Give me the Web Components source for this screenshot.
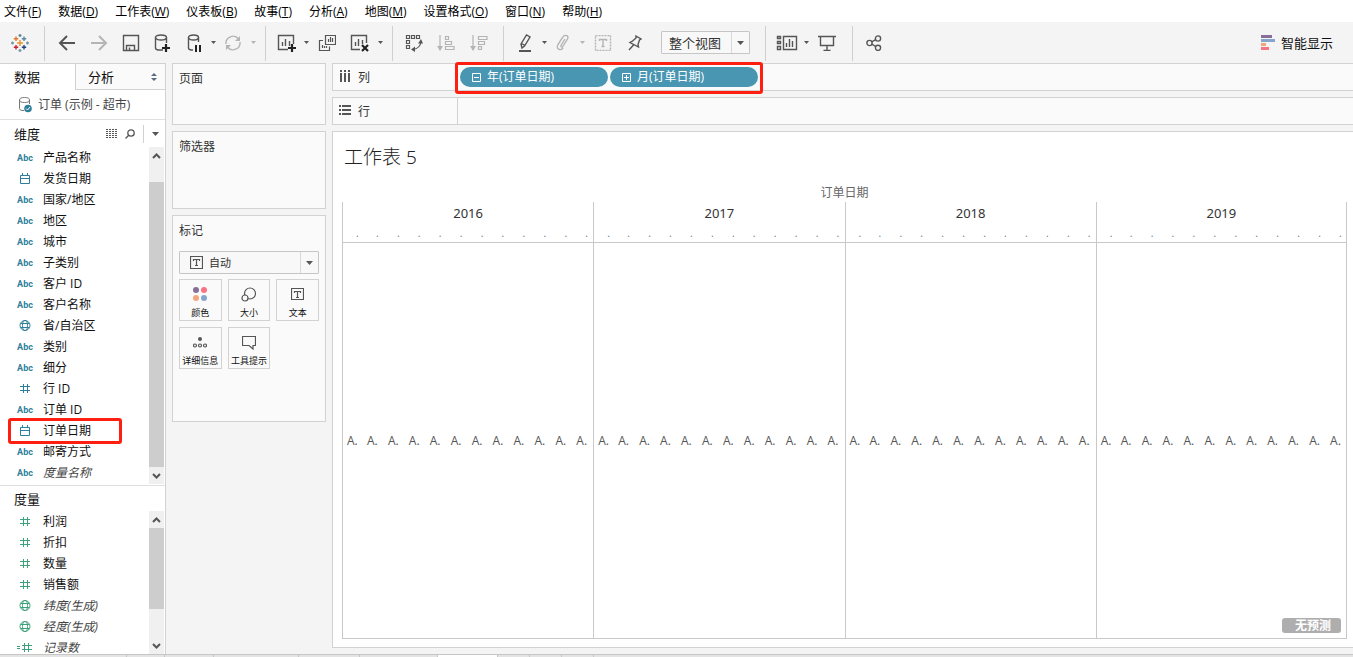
<!DOCTYPE html>
<html lang="zh-CN">
<head>
<meta charset="utf-8">
<title>工作表 5</title>
<style>
  body {
    margin: 0;
    font: 12px/20px "Open Sans", "Noto Sans CJK SC", sans-serif;
    color: #111;
    background: #f4f4f4;
    --line: #d2d2d2;
    --card: #fafafa;
    --mark: #ff1f10;
    --dimension: #2f7f9b;
    --measure: #3fa17c;
  }
</style>
</head>
<body>
<workbook-app></workbook-app>

<script>
const RESET = `
  *, *::before { box-sizing: border-box; }
  button { font: inherit; color: inherit; background: none; border: 0; padding: 0; margin: 0; cursor: pointer; }
  h1, h2, ul { margin: 0; padding: 0; font: inherit; list-style: none; }
  svg { display: block; }
`;

function define(name, markup, setup) {
  const template = document.createElement('template');
  customElements.define(name, class extends HTMLElement {
    constructor() {
      super();
      template.innerHTML = template.innerHTML || markup.replace('<style>', '<style>' + RESET);
      this.attachShadow({ mode: 'open' }).append(template.content.cloneNode(true));
    }
    connectedCallback() {
      if (setup) setup(this, this.shadowRoot);
    }
  });
}

const CARET = '<svg width="7" height="4"><path d="M0 0H7L3.500 4Z" fill="currentColor"/></svg>';
const SMALL_CARET = '<svg width="5" height="3" style="flex:none"><path d="M0 0H5L2.500 3Z" fill="currentColor"/></svg>';

/* ---------- menu bar ---------- */
define('menu-link', `
<style>
  :host { display: block; }
  a { color: #000; text-decoration: none; white-space: nowrap; }
  u { text-underline-offset: 1px; }
</style>
<a href="#"><slot></slot>(<u></u>)</a>`, (el, root) => {
  root.querySelector('u').textContent = el.getAttribute('key');
});

define('menu-bar', `
<style>
  :host { display: block; background: #fff; }
  nav { display: flex; gap: 17px; height: 22px; padding: 2px 4px 0; }
</style>
<nav aria-label="主菜单">
  <menu-link key="F">文件</menu-link>
  <menu-link key="D">数据</menu-link>
  <menu-link key="W">工作表</menu-link>
  <menu-link key="B">仪表板</menu-link>
  <menu-link key="T">故事</menu-link>
  <menu-link key="A">分析</menu-link>
  <menu-link key="M">地图</menu-link>
  <menu-link key="O">设置格式</menu-link>
  <menu-link key="N">窗口</menu-link>
  <menu-link key="H">帮助</menu-link>
</nav>`);

/* ---------- toolbar ---------- */
define('tool-button', `
<style>
  :host { display: flex; color: #555; }
  :host([disabled]) { color: #b4b4b4; }
  button { display: flex; align-items: center; justify-content: center; height: 32px; }
  .main { width: 32px; }
  :host([size="s"]) .main { width: 30px; }
  :host([size="l"]) .main { width: 34px; }
  .more { width: 8px; display: none; }
  :host([menu]) .more { display: flex; }
</style>
<button class="main"><slot></slot></button>
<button class="more" aria-label="更多">${SMALL_CARET}</button>`, (el, root) => {
  root.querySelector('.main').setAttribute('aria-label', el.getAttribute('label'));
});

define('drop-select', `
<style>
  :host { display: block; position: relative; color: #333; }
  select {
    appearance: none; display: block; width: 100%; height: 23px; margin: 0;
    padding: 0 20px 0 var(--inset, 7px);
    font: inherit; color: inherit; background: #f8f8f8;
    border: 1px solid #c6c6c6; border-radius: 1px; outline: 0;
  }
  span {
    position: absolute; inset: 1px 1px 1px auto; width: 18px;
    display: flex; align-items: center; justify-content: center;
    border-left: 1px solid #d8d8d8; color: #555; pointer-events: none;
  }
  ::slotted(svg) { position: absolute; left: 11px; top: 5px; pointer-events: none; }
</style>
<select><option></option></select><slot></slot><span>${CARET}</span>`, (el, root) => {
  root.querySelector('option').textContent = el.getAttribute('value');
  root.querySelector('select').setAttribute('aria-label', el.getAttribute('label'));
});

define('tool-bar', `
<style>
  :host { display: flex; align-items: center; height: 41px; padding: 0 20px 0 4px; }
  i { width: 1px; height: 35px; margin: 2px 6px 0 8px; background: #d0d0d0; }
  svg { fill: none; stroke: currentColor; stroke-width: 1.4; }
  drop-select { width: 89px; margin: 0 7px 0 11px; font-size: 13px; }
  .show { display: flex; align-items: center; gap: 6px; margin-left: auto; font-size: 13px; color: #111; }
</style>
<tool-button label="开始">
  <svg width="18" height="18"><path stroke="#eb912c" d="M9 6V12M6 9H12" stroke-width="1.500"/><path stroke="#e8762d" d="M5 2.500V7M2.800 4.700H7.200"/><path stroke="#5b879b" d="M13 2.500V7M10.800 4.700H15.200M9 0V3M7.500 1.500H10.500"/><path stroke="#c72035" d="M5 11V15.500M2.800 13.300H7.200"/><path stroke="#1f447e" d="M13 11V15.500M10.800 13.300H15.200"/><path stroke="#7199a6" d="M9 15V18M7.500 16.500H10.500M1.500 7.500V10.500M0 9H3M16.500 7.500V10.500M15 9H18"/></svg>
</tool-button>
<i></i>
<tool-button label="撤消"><svg width="18" height="16" style="stroke-width:2"><path d="M17 8H2M9 1L2 8L9 15"/></svg></tool-button>
<tool-button label="重做" disabled><svg width="18" height="16" style="stroke-width:2"><path d="M1 8H16M9 1L16 8L9 15"/></svg></tool-button>
<tool-button label="保存"><svg width="18" height="18"><path d="M1.500 1.500H16.500V16.500H1.500ZM4.500 16.500V11.500H12.500V16.500M7.500 13.500V16"/></svg></tool-button>
<tool-button label="新建数据源"><svg width="18" height="18"><path d="M9 16H4Q1.500 15.500 1.500 14V3.500M12.500 3.500V9"/><ellipse cx="7" cy="3.500" rx="5.500" ry="2.500"/><path d="M12 10V18M8 14H16" stroke="#222" stroke-width="2.200"/></svg></tool-button>
<tool-button label="暂停自动更新" menu size="s"><svg width="18" height="18"><path d="M8 16H6Q3.500 15.500 3.500 14V3.500M13.500 3.500V8"/><ellipse cx="8.500" cy="3.500" rx="5" ry="2.500"/><path d="M11 11V18M15 11V18" stroke="#222" stroke-width="2"/></svg></tool-button>
<tool-button label="运行更新" disabled menu><svg width="18" height="16"><path d="M2 9A7 7 0 0 1 14.500 4M16 7A7 7 0 0 1 3.500 12"/><path fill="currentColor" stroke="none" d="M16 1V6H11ZM2 15V10H7Z"/></svg></tool-button>
<i></i>
<tool-button label="新建工作表" menu size="s"><svg width="20" height="18"><path d="M11 15.500H1.500V1.500H16.500V10M5.500 12V8M8.500 12V5M12.500 12V7"/><path d="M15 10V18M11 14H19" stroke="#222" stroke-width="2.200"/></svg></tool-button>
<tool-button label="复制" size="l"><svg width="18" height="18" style="stroke-width:1.200"><path d="M7.500 1.500H17.500V10.500H7.500ZM10.500 8V5M12.500 8V3M14.500 8V4M5 6.500H1.500V16.500H11.500V12.500M4.500 14V11M6.500 14V12M8.500 14V12"/></svg></tool-button>
<tool-button label="清除工作表" menu><svg width="20" height="18"><path d="M10 15.500H1.500V1.500H16.500V9M5.500 12V8M8.500 12V5M12.500 10V6"/><path d="M12 11L18 17M18 11L12 17" stroke="#222" stroke-width="2.200"/></svg></tool-button>
<i></i>
<tool-button label="交换行和列" size="s"><svg width="18" height="18" style="stroke-width:1.200"><path d="M1.500 1.500H4.500V4.500H1.500ZM6.500 1.500H9.500V4.500H6.500ZM11.500 1.500H14.500V4.500H11.500ZM1.500 6.500H4.500V9.500H1.500ZM1.500 11.500H4.500V14.500H1.500ZM16 8Q15 14.500 8 15.500"/><path fill="currentColor" stroke="none" d="M16 5L18 9.500H13ZM6 15.500L10 12.500V18Z"/></svg></tool-button>
<tool-button label="升序排序" disabled size="l"><svg width="18" height="16" style="stroke-width:1.200"><path d="M3 0V12M8.500 1.500H11.500V4.500H8.500ZM8.500 6.500H14.500V9.500H8.500ZM8.500 11.500H17V14.500H8.500Z"/><path fill="currentColor" stroke="none" d="M0 11H6L3 16Z"/></svg></tool-button>
<tool-button label="降序排序" disabled><svg width="18" height="16" style="stroke-width:1.200"><path d="M3 0V12M8.500 1.500H17V4.500H8.500ZM8.500 6.500H14.500V9.500H8.500ZM8.500 11.500H11.500V14.500H8.500Z"/><path fill="currentColor" stroke="none" d="M0 11H6L3 16Z"/></svg></tool-button>
<i></i>
<tool-button label="突出显示" menu size="s"><svg width="14" height="18"><path d="M4 14L3 10L8.500 1L12 3L6.500 12ZM3.500 9.500L7 11.500"/><path d="M1 17H13" stroke-width="2"/></svg></tool-button>
<tool-button label="组成员" disabled menu size="s"><svg width="14" height="17"><path d="M9 5L5 11.500Q4.500 13.500 6.500 13L11.500 5Q13 1.500 9.500 1.200Q8 1 6.500 3.500L2 10.500Q0 14.500 3.500 15.500Q5.500 16 7 14"/></svg></tool-button>
<tool-button label="显示标记标签" disabled size="l"><svg width="18" height="16"><path d="M1.500 .5H16.500V15.500H1.500Z" stroke-dasharray="2 1"/><path d="M5.500 6V4.500H12.500V6M9 4.500V12M7.500 11.500H10.500"/></svg></tool-button>
<tool-button label="固定轴" size="s"><svg width="14" height="16"><path d="M8 1L13 4L11.500 5L10 9.500L10.500 12L2 7.500L4 6.500L8 3ZM5.500 10L1 15"/></svg></tool-button>
<drop-select label="适合" value="整个视图"></drop-select>
<i></i>
<tool-button label="显示/隐藏卡" menu size="s"><svg width="22" height="16"><path d="M1.500 1.500H4.500V3.500H1.500ZM1.500 6.500H4.500V8.500H1.500ZM1.500 11.500H4.500V14.500H1.500ZM7.500 1.500H20.500V14.500H7.500ZM10.500 12V8M13.500 12V4M16.500 12V6"/></svg></tool-button>
<tool-button label="演示模式" size="l"><svg width="18" height="16"><path d="M0 1.500H18M2.500 1.500V10.500H15.500V1.500M9 10.500V15M5.500 15.500H12.500"/></svg></tool-button>
<i></i>
<tool-button label="共享工作簿" size="s"><svg width="16" height="16"><circle cx="3.500" cy="8" r="2.600"/><circle cx="12" cy="3.500" r="2.600"/><circle cx="12" cy="12.800" r="2.600"/><path d="M5.800 6.800L9.700 4.700M5.800 9.200L9.700 11.500"/></svg></tool-button>
<button class="show"><svg width="14" height="15" style="stroke:none"><path fill="#866f98" d="M0 0H11V3H0Z"/><path fill="#85a5cc" d="M0 4H14V7H0Z"/><path fill="#f2a67e" d="M0 8H5V11H0Z"/><path fill="#f97383" d="M0 12H8V15H0Z"/></svg>智能显示</button>`);

/* ---------- data pane ---------- */
const FIELD_ICONS = {
  text: '<b>Abc</b>',
  date: '<svg width="12" height="11"><path d="M1.500 2.500H10.500V10.500H1.500ZM1.500 5.500H10.500M3.500 0V3M8.500 0V3"/></svg>',
  geo: '<svg width="12" height="13"><circle cx="6" cy="6.500" r="5"/><ellipse cx="6" cy="6.500" rx="2.500" ry="5"/><path d="M1.500 4.500H10.500M1.500 8.500H10.500"/></svg>',
  num: '<svg width="12" height="11"><path d="M4.500 1V10M8.500 1V10M1 3.500H11M1 7.500H11"/></svg>',
  calc: '<svg width="16" height="11"><path d="M7.500 1V10M11.500 1V10M5 3.500H15M5 7.500H15M0 4.500H3M0 6.500H3"/></svg>'
};

define('data-field', `
<style>
  :host { display: flex; align-items: center; height: 21px; padding-left: 14px; position: relative; white-space: nowrap; }
  :host([generated]) { font-style: italic; color: #444; }
  span { display: flex; justify-content: center; width: 22px; margin-right: 7px; color: var(--hue); font-style: normal; }
  b { font: 700 9px/20px Roboto, sans-serif; }
  svg { fill: none; stroke: currentColor; }
  :host([marked])::after {
    content: ""; position: absolute; left: 8px; top: -2px; width: 114px; height: 26px; box-sizing: border-box;
    border: 3px solid var(--mark); border-radius: 3px;
  }
</style>
<span></span><slot></slot>`, (el, root) => {
  root.querySelector('span').innerHTML = FIELD_ICONS[el.getAttribute('type')];
});

define('scroll-track', `
<style>
  :host { display: flex; flex-direction: column; width: 15px; margin-right: 1px; background: #f0f0f0; }
  button { display: flex; align-items: center; justify-content: center; flex: none; height: 17px; }
  svg { fill: none; stroke: #555; stroke-width: 2; }
  div { flex: 1; display: grid; grid-template-rows: var(--before) var(--thumb) var(--after); }
  div::after { content: ""; grid-row: 2; background: #cdcdcd; }
</style>
<button aria-label="向上滚动"><svg width="9" height="6"><path d="M1 5L4.500 1.500L8 5"/></svg></button>
<div></div>
<button aria-label="向下滚动"><svg width="9" height="6"><path d="M1 1L4.500 4.500L8 1"/></svg></button>`);

define('data-pane', `
<style>
  :host { display: flex; flex-direction: column; background: #fff; border: solid var(--line); border-width: 1px 1px 0 0; min-height: 0; }
  .tabs { display: flex; height: 26px; font-size: 13px; }
  .tabs button { text-align: left; }
  .tabs .on { width: 75px; padding-left: 14px; }
  .tabs .off { flex: 1; display: flex; align-items: center; justify-content: space-between; padding: 0 8px 0 12px;
    background: var(--card); border: solid var(--line); border-width: 0 0 1px 1px; }
  .source { display: flex; align-items: center; gap: 6px; height: 30px; padding-left: 18px; color: #444; border-bottom: 1px solid #e0e0e0; }
  h2 { flex: 1; font-size: 13px; }
  header { display: flex; align-items: center; height: 27px; padding-left: 14px; }
  header.short { height: 26px; border-top: 1px solid #e0e0e0; }
  header button { color: #555; }
  header .find { margin: 0 8px 0 7px; }
  header .more { display: flex; align-items: center; width: 22px; height: 18px; padding-left: 8px; border-left: 1px solid var(--line); }
  section { display: flex; min-height: 0; }
  section > div { flex: 1; overflow: hidden; }
  .dims { flex: none; --hue: var(--dimension); padding-bottom: 1px; --before: 18fr; --thumb: 285fr; --after: 0fr; }
  .dims > div { padding-bottom: 1px; }
  .meas { flex: 1; --hue: var(--measure); --before: 0fr; --thumb: 81fr; --after: 28fr; }
</style>
<div class="tabs">
  <button class="on">数据</button>
  <button class="off">分析<svg width="6" height="8" fill="#5a6b80"><path d="M0 3L3 0L6 3ZM0 5L3 8L6 5Z"/></svg></button>
</div>
<div class="source">
  <svg width="14" height="16" fill="none" stroke="#777"><path d="M6 13.500H4Q1.500 13 1.500 11.500V3M11.500 3V7"/><ellipse cx="6.500" cy="3" rx="5" ry="2.500"/><circle cx="10" cy="11.500" r="3.800" fill="#2f7f9b" stroke="none"/><path d="M8 11.500L9.500 13L12 10" stroke="#fff"/></svg>
  订单 (示例 - 超市)
</div>
<header>
  <h2>维度</h2>
  <button aria-label="查看数据"><svg width="12" height="9" stroke="currentColor"><path d="M0 .5H12M0 2.500H12M0 4.500H12M0 6.500H12M0 8.500H12" stroke-dasharray="2 1"/></svg></button>
  <button class="find" aria-label="查找字段"><svg width="10" height="10" fill="none" stroke="currentColor" stroke-width="1.300"><circle cx="6" cy="4" r="3.200"/><path d="M3.500 6.500L.5 9.500"/></svg></button>
  <button class="more" aria-label="维度菜单">${CARET}</button>
</header>
<section class="dims">
  <div>
    <data-field type="text">产品名称</data-field>
    <data-field type="date">发货日期</data-field>
    <data-field type="text">国家/地区</data-field>
    <data-field type="text">地区</data-field>
    <data-field type="text">城市</data-field>
    <data-field type="text">子类别</data-field>
    <data-field type="text">客户 ID</data-field>
    <data-field type="text">客户名称</data-field>
    <data-field type="geo">省/自治区</data-field>
    <data-field type="text">类别</data-field>
    <data-field type="text">细分</data-field>
    <data-field type="num">行 ID</data-field>
    <data-field type="text">订单 ID</data-field>
    <data-field type="date" marked>订单日期</data-field>
    <data-field type="text">邮寄方式</data-field>
    <data-field type="text" generated>度量名称</data-field>
  </div>
  <scroll-track></scroll-track>
</section>
<header class="short"><h2>度量</h2></header>
<section class="meas">
  <div>
    <data-field type="num">利润</data-field>
    <data-field type="num">折扣</data-field>
    <data-field type="num">数量</data-field>
    <data-field type="num">销售额</data-field>
    <data-field type="geo" generated>纬度(生成)</data-field>
    <data-field type="geo" generated>经度(生成)</data-field>
    <data-field type="calc" generated>记录数</data-field>
  </div>
  <scroll-track></scroll-track>
</section>`);

/* ---------- cards ---------- */
define('side-card', `
<style>
  :host { display: block; box-sizing: border-box; padding: 5px 6px; color: #333; background: var(--card); border: 1px solid var(--line); }
</style>
<h2><slot name="title"></slot></h2>
<slot></slot>`);

define('mark-button', `
<style>
  :host { display: block; }
  button { display: flex; flex-direction: column; align-items: center; justify-content: space-between; width: 100%; height: 42px;
    padding: 7px 0 1px; font-size: 9px; line-height: 12px; color: #111; border: 1px solid var(--line); white-space: nowrap; }
</style>
<button><slot name="icon"></slot><slot></slot></button>`);

define('card-column', `
<style>
  :host { display: flex; flex-direction: column; gap: 6px; }
  .pages { height: 62px; }
  .filters { height: 78px; }
  .marks { height: 207px; }
  drop-select { --inset: 29px; margin: 10px 0 5px; font-size: 11px; }
  .grid { display: grid; grid-template-columns: repeat(3, 1fr); gap: 6px; }
  svg { fill: none; stroke: #555; stroke-width: 1.200; }
</style>
<side-card class="pages"><span slot="title">页面</span></side-card>
<side-card class="filters"><span slot="title">筛选器</span></side-card>
<side-card class="marks"><span slot="title">标记</span>
  <drop-select label="标记类型" value="自动"><svg width="13" height="13"><path d="M.5 .5H12.500V12.500H.5ZM3.500 5V3.500H9.500V5M6.500 4V9.500M5 9.500H8"/></svg></drop-select>
  <div class="grid">
    <mark-button><svg slot="icon" width="14" height="14" style="stroke:none"><circle cx="3" cy="3" r="3" fill="#866f98"/><circle cx="11" cy="3" r="3" fill="#f97383"/><circle cx="3" cy="11" r="3" fill="#f2a67e"/><circle cx="11" cy="11" r="3" fill="#85a5cc"/></svg>颜色</mark-button>
    <mark-button><svg slot="icon" width="16" height="15"><circle cx="9" cy="6.500" r="5.500"/><circle cx="4" cy="11" r="3" fill="#fafafa"/></svg>大小</mark-button>
    <mark-button><svg slot="icon" width="13" height="14"><path d="M.5 1.500H12.500V12.500H.5ZM3.500 6V4.500H9.500V6M6.500 5V10.500M5 10.500H8"/></svg>文本</mark-button>
    <mark-button><svg slot="icon" width="14" height="14"><circle cx="7" cy="4" r="2" fill="#555" stroke="none"/><circle cx="2" cy="10.500" r="1.500"/><circle cx="7" cy="10.500" r="1.500"/><circle cx="12" cy="10.500" r="1.500"/></svg>详细信息</mark-button>
    <mark-button><svg slot="icon" width="14" height="15"><path d="M.5 1.500H13.500V10.500H11V14L7 10.500H.5Z"/></svg>工具提示</mark-button>
  </div>
</side-card>`);

/* ---------- shelves ---------- */
define('field-pill', `
<style>
  :host { display: block; }
  button { display: flex; align-items: center; gap: 5px; width: 148px; height: 20px; padding-left: 12px; border-radius: 10px; color: #fff; background: #4996b2; }
  svg { fill: none; stroke: #fff; }
  .v { display: none; }
  :host([collapsed]) .v { display: block; }
</style>
<button><svg width="10" height="10"><path d="M.5 1.500H8.500V9.500H.5ZM2 5.500H7"/><path class="v" d="M4.500 3V8"/></svg><slot></slot></button>`);

define('field-shelf', `
<style>
  :host { display: flex; height: 28px; background: var(--card); border: solid var(--line); border-width: 1px 0 1px 1px; box-sizing: border-box; color: #333; }
  .name { display: flex; align-items: center; gap: 7px; width: 125px; padding-left: 6px; border-right: 1px solid var(--line); }
  ::slotted(span) { padding-top: 2px; }
  .pills { display: flex; align-items: center; gap: 2px; padding-left: 2px; position: relative; }
  :host([marked]) .pills::after {
    content: ""; position: absolute; inset: -2px -5px -4px -3px; border: 3px solid var(--mark); border-radius: 3px; pointer-events: none;
  }
</style>
<div class="name"><slot name="icon"></slot><slot name="label"></slot></div>
<div class="pills"><slot></slot></div>`);

/* ---------- sheet view ---------- */
define('sheet-view', `
<style>
  :host { display: flex; flex-direction: column; background: #fff; border: solid var(--line); border-width: 1px 0 1px 1px; padding: 11px 6px 8px 9px; box-sizing: border-box; min-height: 0; }
  h1 { font: 300 19px/28px "Noto Sans", "Noto Sans CJK SC", sans-serif; padding-left: 2px; color: #222; margin-bottom: 12px; }
  .plot { flex: 1; display: flex; min-height: 0; position: relative; }
  table { width: 100%; height: 100%; table-layout: fixed; border-collapse: separate; border-spacing: 0; color: #333; }
  th, td { padding: 0; font-weight: 400; line-height: 18px; text-align: left; white-space: nowrap; }
  .dim th { height: 19px; text-align: center; color: #666; }
  .years th { height: 22px; text-align: center; border-left: 1px solid #c8c8c8; font-family: "Noto Sans", sans-serif; font-size: 13px; }
  .months th { height: 19px; padding-left: 13px; border-bottom: 1px solid #c8c8c8; color: #5a7da0; font-size: 10px; line-height: 10px; vertical-align: middle; }
  .marks td { border-bottom: 1px solid #c8c8c8; padding-left: 4px; color: #555; vertical-align: middle; }
  .first { border-left: 1px solid #c8c8c8; }
  .last { border-right: 1px solid #c8c8c8; }
  .badge { position: absolute; right: 6px; bottom: 6px; width: 59px; height: 15px; padding-right: 10px; border-radius: 3px;
    font: 700 12px/14px "Liberation Serif", "Noto Sans CJK SC", serif; text-align: right; color: #fff; background: #aeaeae; }
</style>
<h1>工作表 5</h1>
<div class="plot">
  <table>
    <thead>
      <tr class="dim"><th colspan="48">订单日期</th></tr>
      <tr class="years"></tr>
      <tr class="months"></tr>
    </thead>
    <tbody><tr class="marks"></tr></tbody>
  </table>
  <button class="badge">无预测</button>
</div>`, (el, root) => {
  const years = [2016, 2017, 2018, 2019];
  const edge = i => (i % 12 === 0 ? 'first' : '') + (i === 47 ? 'last' : '');
  const months = Array.from({ length: 48 }, (_, i) => i);
  root.querySelector('.years').innerHTML = years.map((y, i) => `<th colspan="12" class="${i === 3 ? 'last' : ''}">${y}</th>`).join('');
  root.querySelector('.months').innerHTML = months.map(i => `<th class="${edge(i)}">.</th>`).join('');
  root.querySelector('.marks').innerHTML = months.map(i => `<td class="${edge(i)}">A.</td>`).join('');
});

define('sheet-tabs', `
<style>
  :host { display: flex; height: 3px; flex: none; background: #e4e4e4; border-top: 1px solid #c6c6c6; }
  i { width: 32px; border-right: 1px solid #c6c6c6; }
  .a { width: 127px; } .b { width: 38px; } .c { width: 49px; } .d { width: 85px; }
  .e { width: 61px; } .f { width: 78px; } .on { width: 60px; background: #fff; }
</style>
<i class="a"></i><i class="b"></i><i class="c"></i><i class="d"></i><i class="e"></i><i class="f"></i><i class="on"></i><i></i><i></i><i></i>`);

define('workbook-app', `
<style>
  :host { display: flex; flex-direction: column; height: 100vh; overflow: hidden; }
  main { flex: 1; min-height: 0; display: grid; grid-template-columns: 166px 154px minmax(0, 1fr); column-gap: 6px; }
  .work { display: flex; flex-direction: column; gap: 6px; padding-bottom: 6px; min-height: 0; }
  sheet-view { flex: 1; }
</style>
<menu-bar></menu-bar>
<tool-bar></tool-bar>
<main>
  <data-pane></data-pane>
  <card-column></card-column>
  <div class="work">
    <field-shelf marked>
      <svg slot="icon" width="12" height="14" fill="#555"><path d="M1 0H3V2H1ZM5 0H7V2H5ZM9 0H11V2H9ZM1 3H3V12H1ZM5 3H7V12H5ZM9 3H11V12H9Z"/></svg>
      <span slot="label">列</span>
      <field-pill>年(订单日期)</field-pill>
      <field-pill collapsed>月(订单日期)</field-pill>
    </field-shelf>
    <field-shelf>
      <svg slot="icon" width="12" height="14" fill="#555"><path d="M0 1H2V3H0ZM0 5H2V7H0ZM0 9H2V11H0ZM3 1H12V3H3ZM3 5H12V7H3ZM3 9H12V11H3Z"/></svg>
      <span slot="label">行</span>
    </field-shelf>
    <sheet-view></sheet-view>
  </div>
</main>
<sheet-tabs></sheet-tabs>`);
</script>
</body>
</html>
